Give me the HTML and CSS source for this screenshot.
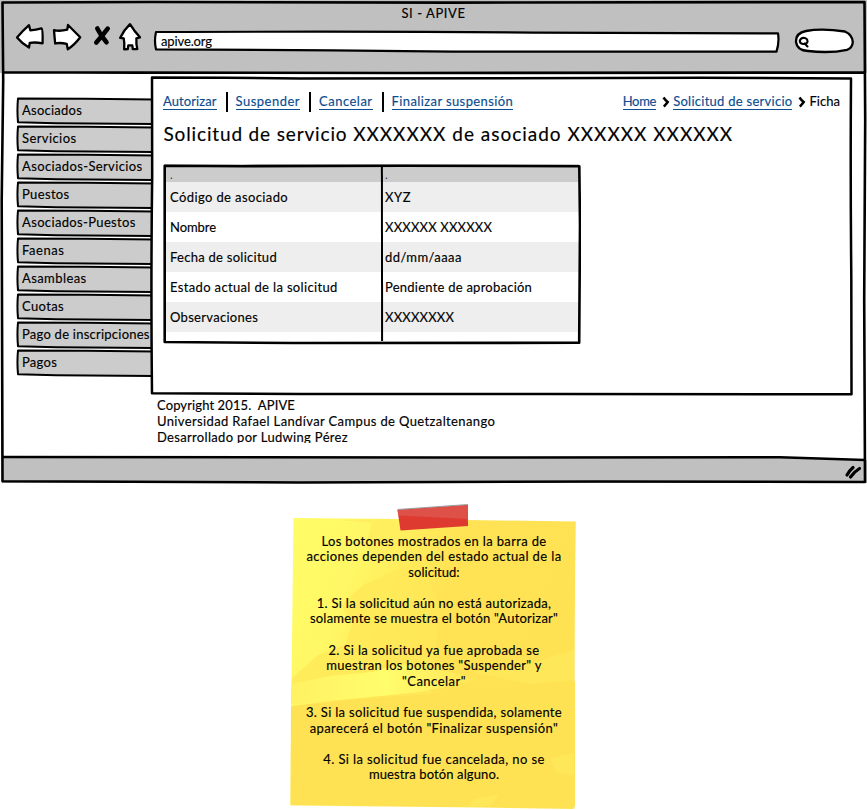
FILE: index.html
```html
<!DOCTYPE html>
<html lang="es">
<head>
<meta charset="utf-8">
<title>SI - APIVE</title>
<link rel="stylesheet" href="styles.css">
</head>
<body>
<svg class="defs" width="0" height="0">
  <symbol id="tab-shape" viewBox="0 0 138 28">
    <path d="M2 1.300 L70 1.500 L140 2.600 V27.300 L80 26.600 L40 26.500 L2 25.200 Q.9 13 2 1.300Z" fill="#ccc"/>
    <path d="M140 2.600 L70 1.800 L2 1.500 Q.9 13 2 25.200 L40 26.300 L140 27" fill="none" stroke="#000" stroke-width="2" stroke-linejoin="round"/>
  </symbol>
</svg>
<div class="window">
  <header class="titlebar">
    <h1 class="window-title ls57">SI - APIVE</h1>
    <div class="toolbar">
      <svg class="nav-icons" width="130" height="30" viewBox="15 22 130 30">
        <g fill="#fff" stroke="#000" stroke-width="2.3" stroke-linejoin="round" stroke-linecap="round">
          <path d="M17 37.5 Q23 30.500 29 25.200 L30.300 30.300 Q36 30 41.500 28.400 Q42.900 29 42.600 43.300 Q36 42 29.800 42.800 L29 47.500 Q22 43.500 17 37.500Z"/>
          <path d="M54 30.200 Q60 31.500 67.300 29.600 L68 25 Q74 31 80.200 37.300 Q74.500 45 67.800 49.300 L66.700 43.800 Q60 42.400 55.200 43.500 Q54.500 37 54 30.200Z"/>
          <path d="M130 24.200 Q134 31 140 37.300 L136.400 38.300 Q136 44 137.300 49 L132.800 49.200 L132.300 45.300 L128.300 45.300 L127.800 49 L124.200 49.300 Q124.700 43 123.700 38.300 L120.200 37.800 Q124 30 130 24.200Z"/>
        </g>
        <path d="M97.300 28.500 Q101 36 106.500 42.300 M107.700 28.700 Q103 35 96.300 42.500" fill="none" stroke="#000" stroke-width="4.600" stroke-linecap="round"/>
      </svg>
      <div class="address">
        <svg class="sketch" viewBox="0 0 628 24"><path d="M3 2 Q250 1.200 380 2.600 L625 3.400 Q626.500 12 623.500 21.700 L300 21.600 L180 20.400 L3 19.300 Q1 11 3 2Z" fill="#fff" stroke="#000" stroke-width="2.200" stroke-linejoin="round"/></svg>
        <span class="ls-12">apive.org</span>
      </div>
      <svg class="search" width="62" height="28" viewBox="794 27 62 28">
        <path d="M796 42 Q795.500 33 806 31 Q822 28 845 31.500 Q852.500 35 852.800 42 Q852.500 48 847 49.800 Q830 53.500 808 51 Q797 50.500 796 42Z" fill="#fff" stroke="#000" stroke-width="2.300"/>
        <path d="M803.500 37.800 Q807.800 38 807.500 41.800 Q806.500 44.300 803 44 Q799.500 43.500 799.800 40.700 Q800.800 38 803.500 37.800Z M804.500 43.500 L807.500 46.500" fill="none" stroke="#000" stroke-width="2.100" stroke-linecap="round"/>
      </svg>
    </div>
  </header>

  <div class="workspace">
    <nav class="tabs">
      <a class="tab ls24"><svg class="sketch"><use href="#tab-shape"/></svg><span>Asociados</span></a>
      <a class="tab ls41"><svg class="sketch"><use href="#tab-shape"/></svg><span>Servicios</span></a>
      <a class="tab ls37"><svg class="sketch"><use href="#tab-shape"/></svg><span>Asociados-Servicios</span></a>
      <a class="tab ls35"><svg class="sketch"><use href="#tab-shape"/></svg><span>Puestos</span></a>
      <a class="tab ls35"><svg class="sketch"><use href="#tab-shape"/></svg><span>Asociados-Puestos</span></a>
      <a class="tab ls57"><svg class="sketch"><use href="#tab-shape"/></svg><span>Faenas</span></a>
      <a class="tab ls41"><svg class="sketch"><use href="#tab-shape"/></svg><span>Asambleas</span></a>
      <a class="tab ls35"><svg class="sketch"><use href="#tab-shape"/></svg><span>Cuotas</span></a>
      <a class="tab ls24"><svg class="sketch"><use href="#tab-shape"/></svg><span>Pago de inscripciones</span></a>
      <a class="tab ls27"><svg class="sketch"><use href="#tab-shape"/></svg><span>Pagos</span></a>
    </nav>
    <main class="main">
      <section class="panel">
        <svg class="sketch" viewBox="0 0 703 320"><path d="M2 1.500 L75 1.700 L150 2.500 L550 1.800 L701 2.500 Q700.300 100 701.300 200 L701.500 318.300 L400 318 L150 318.100 L2 317.200 Q.8 200 2.200 100Z" fill="#fff" stroke="#000" stroke-width="2.500" stroke-linejoin="round"/></svg>
        <div class="bar">
          <div class="actions">
            <a class="link ls08">Autorizar</a><i class="sep"></i><a class="link ls49">Suspender</a><i class="sep"></i><a class="link ls49">Cancelar</a><i class="sep"></i><a class="link ls39">Finalizar suspensión</a>
          </div>
          <div class="crumbs">
            <a class="link ls-29">Home</a>
            <svg class="chevron" width="8" height="13" viewBox="0 0 8 13"><path d="M1.500 1.500 Q3.500 4.500 5.700 6 Q4 8.500 1.800 10.500" fill="none" stroke="#000" stroke-width="2.500"/></svg>
            <a class="link ls27">Solicitud de servicio</a>
            <svg class="chevron" width="8" height="13" viewBox="0 0 8 13"><path d="M1.500 1.500 Q3.500 4.500 5.700 6 Q4 8.500 1.800 10.500" fill="none" stroke="#000" stroke-width="2.500"/></svg>
            <span class="ls03">Ficha</span>
          </div>
        </div>
        <h2 class="heading">Solicitud de servicio <span>XXXXXXX de asociado XXXXXX XXXXXX</span></h2>
        <div class="grid">
          <div class="row head"><span>.</span><span>.</span></div>
          <div class="row odd"><span class="ls39">Código de asociado</span><span class="ls57">XYZ</span></div>
          <div class="row"><span class="ls-07">Nombre</span><span class="ls19">XXXXXX XXXXXX</span></div>
          <div class="row odd"><span class="ls27">Fecha de solicitud</span><span class="ls41">dd/mm/aaaa</span></div>
          <div class="row"><span class="ls35">Estado actual de la solicitud</span><span class="ls24">Pendiente de aprobación</span></div>
          <div class="row odd"><span class="ls30">Observaciones</span><span class="ls19">XXXXXXXX</span></div>
          <svg class="sketch" viewBox="0 0 418 181"><path d="M1.700 1.800 L80 2.200 L240 1.700 L416.300 2.300 L417 60 L416.200 178.800 L130 179 L1.700 178Z" fill="none" stroke="#000" stroke-width="2.600" stroke-linejoin="round"/><path d="M218.900 3 L219.100 177" stroke="#000" stroke-width="2"/></svg>
        </div>
      </section>
      <footer class="copyright">
        <p class="ls11">Copyright 2015.&nbsp; APIVE</p>
        <p class="ls37">Universidad Rafael Landívar Campus de Quetzaltenango</p>
        <p class="ls32">Desarrollado por Ludwing Pérez</p>
      </footer>
    </main>
  </div>
  <div class="statusbar">
    <svg class="sketch" viewBox="0 0 867 30"><path d="M2 2.400 L440 2.800 L770 2.300 L867 5 V28 H2Z" fill="#c0c0c0"/><path d="M2 1.900 L440 2.600 L780 2.300 L865 4.900" fill="none" stroke="#000" stroke-width="2.500"/><path d="M847 20 Q850 15 853 12.500 M850.500 22 Q854.500 16.500 859.500 13.500" fill="none" stroke="#000" stroke-width="3.200" stroke-linecap="round"/></svg>
  </div>
  <svg class="sketch frame" viewBox="0 0 867 485"><path d="M2.500 2.500 L150 2 L450 2.600 L864.500 2 L865.200 120 L864.200 300 L865 482 L600 481.500 L300 482.500 L2.500 481.300 L1.700 200 L3.200 80Z M3 72.300 L140 72.600 L400 73 L865 72.500" fill="none" stroke="#000" stroke-width="2.600" stroke-linejoin="round"/></svg>
</div>

<aside class="note">
  <svg class="note-paper" viewBox="288 500 292 310">
    <defs>
      <linearGradient id="paper" x1="0" y1="0" x2="1" y2=".4"><stop offset="0" stop-color="#fffd68"/><stop offset=".25" stop-color="#fff765"/><stop offset=".42" stop-color="#ffea5a"/><stop offset=".55" stop-color="#ffe355"/><stop offset="1" stop-color="#ffe252"/></linearGradient>
      <linearGradient id="glow" x1="0" y1="0" x2="1" y2="0"><stop offset="0" stop-color="#fff162"/><stop offset=".5" stop-color="#fffd6c"/><stop offset="1" stop-color="#ffe456"/></linearGradient>
    </defs>
    <path d="M293.500 518 L400 519 L500 520.500 L575.800 521.500 Q574 640 575 806 L573.500 809 L480 807.500 L290.500 805.500 Q291 720 292 640Z" fill="url(#paper)"/>
    <path d="M340 520 L372 523 L366 545 L372 556 L396 550 L400 525 L390 519Z" fill="#ffee5e"/>
    <path d="M292 678 L318 655 L345 645 L352 625 L341 605 L363 585 L420 560 L440 610 L430 700 L291 702Z" fill="#ffe858" opacity=".75"/>
    <path d="M291.500 684 L330 676 L372 672 L400 664 L450 672 L478 680 L420 692 L340 700 L291 704Z" fill="url(#glow)"/>
    <path d="M291 706 L345 700 L430 694 L500 688 L575 682 L575 806 L290.500 805Z" fill="#ffe253"/>
    <path d="M470 672 L530 664 L574 650 L574 680 L530 684Z M550 758 L574 753 L574 776 L556 772Z M474 799 L499 794 L490 806 L468 807Z" fill="#ffe75a"/>
    <path d="M397.500 510 L467.800 505 L468 526 L400.500 530.500Z" fill="#df3a30"/>
    <path d="M397.500 510 L467.800 505 L468 519 L398.500 515.500Z" fill="#de5149"/>
    <path d="M397.500 509.500 L467.800 504.500" stroke="#7e8489" stroke-width=".8"/>
  </svg>
  <div class="note-text">
    <p><span class="ls35">Los botones mostrados en la barra de</span><br><span class="ls39">acciones dependen del estado actual de la</span><br><span class="ls03">solicitud:</span></p>
    <p><span class="ls27">1. Si la solicitud aún no está autorizada,</span><br><span class="ls21">solamente se muestra el botón "Autorizar"</span></p>
    <p><span class="ls35">2. Si la solicitud ya fue aprobada se</span><br><span class="ls30">muestran los botones "Suspender" y</span><br><span class="ls49">"Cancelar"</span></p>
    <p><span class="ls31">3. Si la solicitud fue suspendida, solamente</span><br><span class="ls39">aparecerá el botón "Finalizar suspensión"</span></p>
    <p><span class="ls39">4. Si la solicitud fue cancelada, no se</span><br><span class="ls11">muestra botón alguno.</span></p>
  </div>
</aside>
</body>
</html>
```
FILE: styles.css
```css
* { box-sizing: border-box; }
body {
  margin: 0;
  width: 867px;
  height: 810px;
  overflow: hidden;
  background: #fff;
  color: #000;
  font: 13px/16px Lato, "Noto Sans", sans-serif;
  -webkit-text-stroke: 0.15px currentColor;
  display: flex;
  flex-direction: column;
}
h1, h2, p { margin: 0; font-weight: 400; }
p { white-space: nowrap; }
.defs { position: absolute; }

/* Hand-drawn outlines stretched behind or over their box */
.sketch { position: absolute; left: 0; top: 0; width: 100%; height: 100%; pointer-events: none; }

.window { position: relative; height: 485px; display: flex; flex-direction: column; }

.titlebar { height: 73px; background: #c0c0c0; padding-top: 5px; }
.window-title { font-size: 13px; line-height: 16px; text-align: center; }
.toolbar { display: flex; align-items: flex-start; padding: 1px 0 0 15px; }
.nav-icons { display: block; }
.address {
  position: relative;
  width: 628px;
  height: 24px;
  margin: 8px 0 0 8px;
  padding: 3px 0 0 8px;
}
.address span { position: relative; }
.search { display: block; margin: 5px 0 0 13px; }

.workspace { flex: 1; display: flex; padding-left: 16px; }
.tabs { width: 134px; padding-top: 24px; display: flex; flex-direction: column; }
.tab {
  position: relative;
  flex: none;
  height: 28px;
  width: 138px;
  padding: 5px 0 0 6px;
  white-space: nowrap;
}
.tab span { position: relative; }
.main { width: 703px; padding-top: 3px; position: relative; }
.panel { position: relative; height: 320px; padding: 0 13px; }
.bar { position: relative; display: flex; justify-content: space-between; padding-top: 16px; height: 38px; }
.actions, .crumbs { display: flex; align-items: flex-start; white-space: nowrap; }
.actions > *, .crumbs > * { flex: none; }
.link { color: #0b4d91; border-bottom: 1px solid #0b4d91; height: 17px; margin-top: 1px; }
.sep { width: 2px; height: 20px; background: #000; margin: 0 8px 0 9px; }
.crumbs > span { margin-top: 1px; }
.chevron { margin: 4px 3px 0 6px; }

.heading { position: relative; padding-left: .5px; margin-top: 8px; font-size: 19px; line-height: 24px; letter-spacing: .85px; white-space: nowrap; }
.heading span { letter-spacing: .99px; }

.grid { position: relative; width: 418px; height: 181px; margin-top: 18px; }
.row { display: grid; grid-template-columns: 219px 1fr; height: 30px; line-height: 30px; margin: 0 2px 0 1px; }
.row span { padding-left: 6px; white-space: nowrap; }
.row span + span { padding-left: 2px; }
.head { height: 18px; line-height: 22px; background: #ccc; color: #333; font-size: 11px; -webkit-text-stroke: 0; }
.odd { background: #eee; }

.copyright { padding: 1px 0 0 7px; height: 47px; overflow: hidden; }
.statusbar { position: relative; height: 30px; }

.note { position: relative; width: 292px; height: 310px; margin: 15px 0 0 288px; }
.note-paper { position: absolute; left: 0; top: 0; width: 292px; height: 310px; }
.note-text { position: relative; padding-top: 33.500px; text-align: center; line-height: 15.600px; }
.note-text p + p { margin-top: 15.600px; }

/* Letter tracking, in hundredths of a pixel */
.ls-29 { letter-spacing: -.29px; }
.ls-12 { letter-spacing: -.12px; }
.ls-07 { letter-spacing: -.07px; }
.ls03 { letter-spacing: .03px; }
.ls08 { letter-spacing: .08px; }
.ls11 { letter-spacing: .11px; }
.ls19 { letter-spacing: .19px; }
.ls21 { letter-spacing: .21px; }
.ls24 { letter-spacing: .24px; }
.ls27 { letter-spacing: .27px; }
.ls30 { letter-spacing: .3px; }
.ls31 { letter-spacing: .31px; }
.ls32 { letter-spacing: .32px; }
.ls35 { letter-spacing: .35px; }
.ls37 { letter-spacing: .37px; }
.ls39 { letter-spacing: .39px; }
.ls41 { letter-spacing: .41px; }
.ls49 { letter-spacing: .49px; }
.ls57 { letter-spacing: .57px; }
```
